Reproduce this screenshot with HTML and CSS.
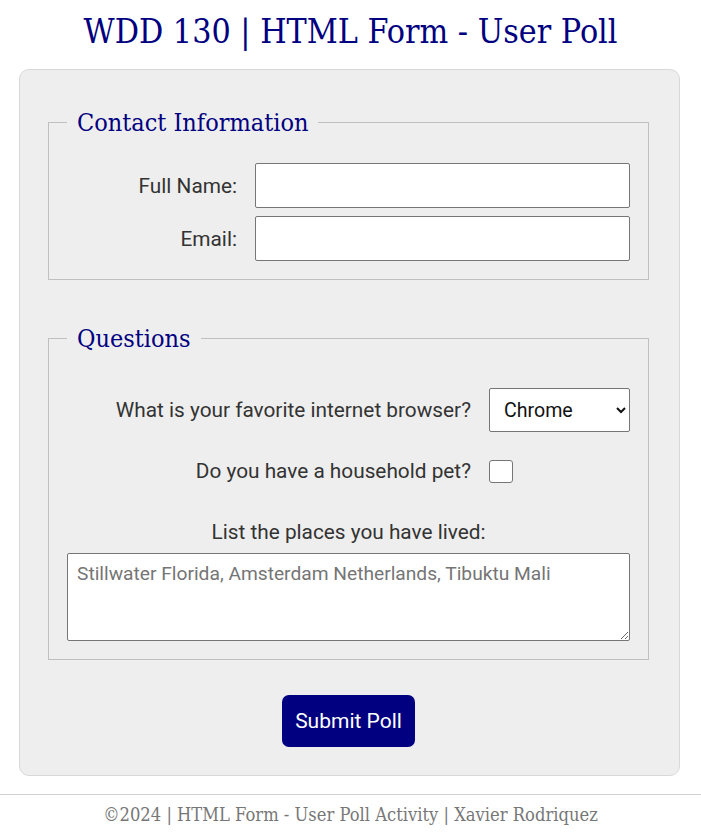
FILE: index.html
```html
<!DOCTYPE html>
<html lang="en">
<head>
<meta charset="utf-8">
<title>WDD 130 | HTML Form - User Poll</title>
<link rel="stylesheet" href="styles.css">
</head>
<body>
<header class="page-header">
  <h1 class="page-title">WDD 130 | HTML Form - User Poll</h1>
</header>
<main class="main">
  <form class="poll">
    <fieldset class="group contact">
      <legend class="group-legend">Contact Information</legend>
      <div class="contact-grid">
        <label class="field-label" for="fullname">Full Name:</label>
        <input class="text-input" id="fullname" type="text">
        <label class="field-label" for="email">Email:</label>
        <input class="text-input" id="email" type="email">
      </div>
    </fieldset>
    <fieldset class="group questions">
      <legend class="group-legend">Questions</legend>
      <div class="q-row">
        <label class="field-label" for="browser">What is your favorite internet browser?</label>
        <select class="select-input" id="browser">
          <option>Chrome</option>
          <option>Firefox</option>
          <option>Safari</option>
          <option>Edge</option>
        </select>
      </div>
      <div class="q-row pet-row">
        <label class="field-label" for="pet">Do you have a household pet?</label>
        <input class="check-input" id="pet" type="checkbox">
      </div>
      <label class="places-label" for="places">List the places you have lived:</label>
      <textarea class="places-input" id="places" placeholder="Stillwater Florida, Amsterdam Netherlands, Tibuktu Mali"></textarea>
    </fieldset>
    <div class="actions">
      <button class="submit-btn" type="submit">Submit Poll</button>
    </div>
  </form>
</main>
<footer class="page-footer">
  <p class="footer-text">©2024 | HTML Form - User Poll Activity | Xavier Rodriquez</p>
</footer>
</body>
</html>
```
FILE: styles.css
```css
* { box-sizing: border-box; }

body {
  margin: 0;
  background: #fff;
  font-family: Roboto, "Liberation Sans", sans-serif;
  color: #333;
}

.page-header {
  padding-top: 10px;
}

.page-title {
  margin: 0;
  text-align: center;
  font-family: "DejaVu Serif Condensed", "DejaVu Serif", serif;
  font-stretch: condensed;
  font-weight: normal;
  font-size: 33.7px;
  line-height: 44px;
  color: #000080;
}

.main {
  padding: 15px 0 0;
}

.poll {
  width: 661px;
  margin: 0 auto 0 19px;
  background: #eeeeee;
  border: 1px solid #d8d8d8;
  border-radius: 10px;
  padding: 38px 30px 28px 28px;
}

.group {
  margin: 0;
  border: 1px solid #c0c0c0;
  padding: 26px 18px 18px;
}

.group + .group {
  margin-top: 44px;
}

.group-legend {
  font-family: "DejaVu Serif Condensed", "DejaVu Serif", serif;
  font-stretch: condensed;
  font-size: 25px;
  color: #000080;
  padding: 0 10px;
  margin-left: 0;
}

.contact-grid {
  display: grid;
  grid-template-columns: 170px 1fr;
  column-gap: 18px;
  row-gap: 8px;
  align-items: center;
}

.field-label {
  text-align: right;
  font-size: 20.8px;
  color: #333;
}

.text-input {
  height: 45px;
  border: 1px solid #767676;
  border-radius: 2px;
  background: #fff;
  font-size: 19.2px;
  padding: 4px 8px;
}

.questions {
  padding-top: 35px;
  padding-bottom: 18px;
}

.q-row {
  display: flex;
  justify-content: flex-end;
  align-items: center;
  gap: 18px;
}

.pet-row {
  margin-top: 27px;
  padding-right: 117px;
}

.select-input {
  width: 141px;
  height: 44px;
  border: 1px solid #767676;
  border-radius: 2px;
  background: #fff;
  font-family: Roboto, "Liberation Sans", sans-serif;
  font-size: 19.6px;
  color: #111;
  padding: 0 6px 0 10px;
}

.check-input {
  appearance: none;
  -webkit-appearance: none;
  margin: 0;
  width: 24px;
  height: 23px;
  border: 1px solid #767676;
  border-radius: 3px;
  background: #fff;
}

.places-label {
  display: block;
  text-align: center;
  font-size: 20.8px;
  color: #333;
  margin-top: 37px;
  margin-bottom: 9px;
}

.places-input {
  display: block;
  width: 100%;
  height: 88px;
  border: 1px solid #767676;
  border-radius: 2px;
  background: #fff;
  font-family: Roboto, "Liberation Sans", sans-serif;
  font-size: 19.2px;
  padding: 8px 9px;
  resize: vertical;
}

.places-input::placeholder {
  color: #757575;
}

.actions {
  display: flex;
  justify-content: center;
  margin-top: 35px;
}

.submit-btn {
  background: #000080;
  color: #fff;
  border: none;
  border-radius: 7px;
  width: 133px;
  height: 52px;
  font-family: Roboto, "Liberation Sans", sans-serif;
  font-size: 21px;
}

.page-footer {
  margin-top: 18px;
  border-top: 1px solid #d0d0d0;
}

.footer-text {
  margin: 9px 0 0;
  text-align: center;
  font-family: "DejaVu Serif Condensed", "DejaVu Serif", serif;
  font-stretch: condensed;
  font-size: 18.2px;
  color: #777;
}
```
